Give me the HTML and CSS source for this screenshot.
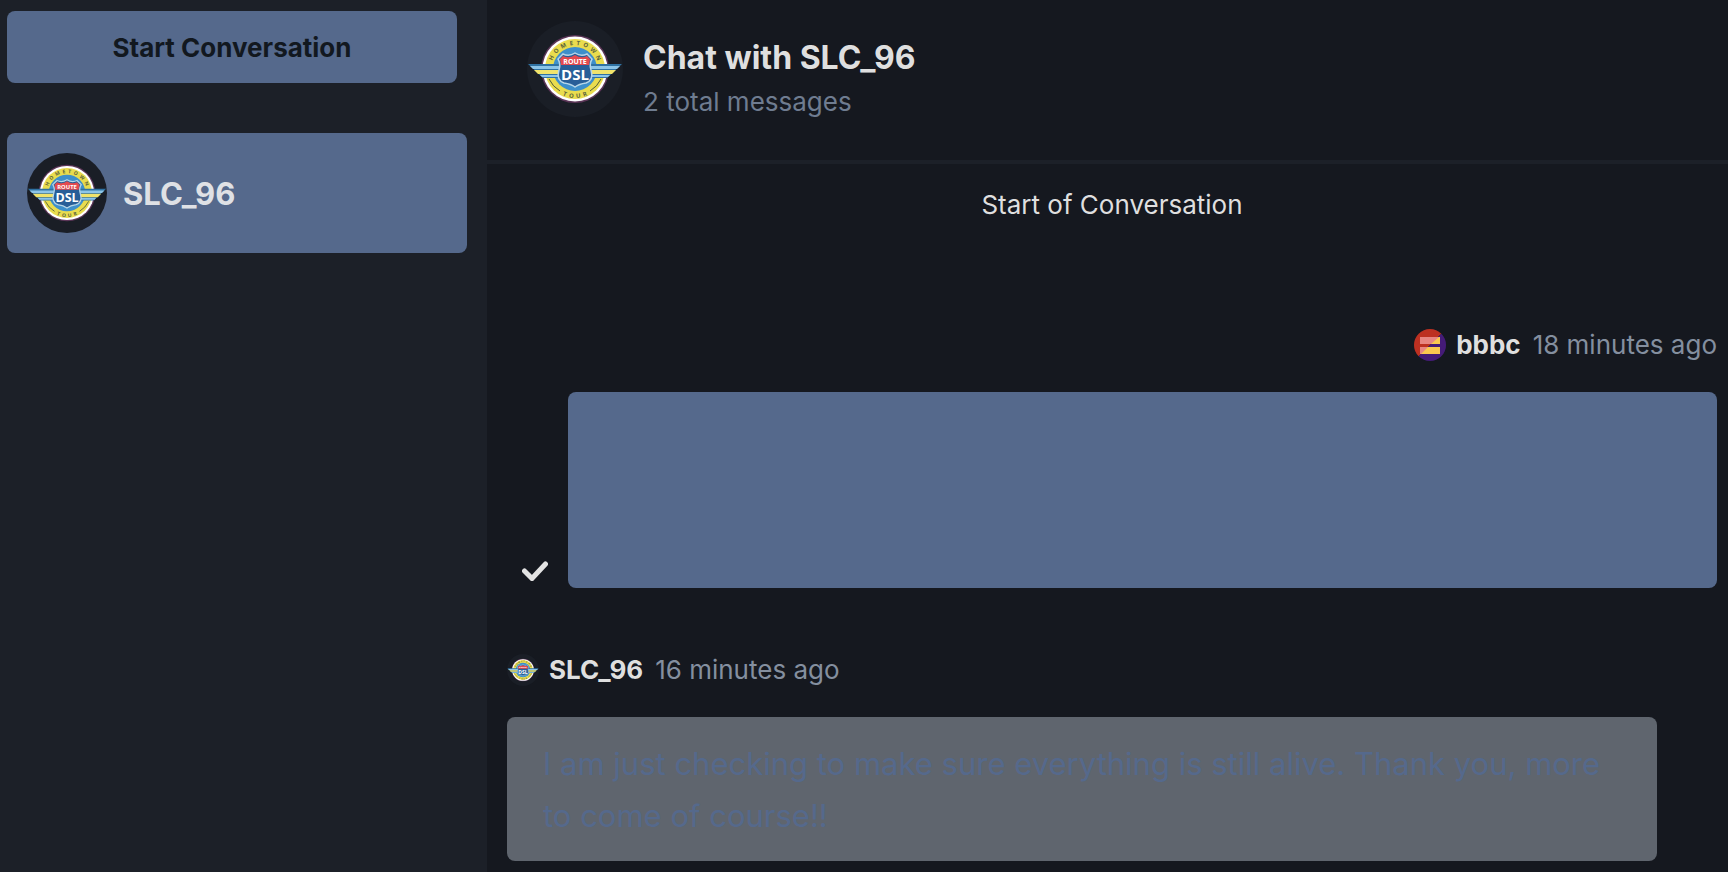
FILE: index.html
```html
<!DOCTYPE html>
<html lang="en">

<head>
    <meta charset="UTF-8">
    <meta name="viewport" content="width=device-width, initial-scale=1.0">
    <title>Messages</title>
    <link rel="stylesheet" href="styles.css">
</head>

<body>
    <!-- Route DSL badge, shared by every SLC_96 avatar -->
    <svg class="sprite" aria-hidden="true">
        <symbol id="route-dsl" viewBox="0 0 96 96">
            <path id="arc-top" d="M24 48a24 24 0 0 1 48 0" fill="none" />
            <path id="arc-bottom" d="M19 48a29 29 0 0 0 58 0" fill="none" />
            <circle cx="48" cy="48" r="34" fill="#5b3557" />
            <circle cx="48" cy="48" r="32.500" fill="#fff" />
            <circle cx="48" cy="48" r="30" fill="#e9dc4e" />
            <circle cx="48" cy="48" r="22" fill="#3d8fcb" />
            <path d="M22 58a28 28 0 0 0 11 12M74 58a28 28 0 0 1-11 12" fill="none" stroke="#4d5a3a" stroke-width="1" />
            <path d="M1 43h94L80 57H16z" fill="#2f72a3" />
            <path d="M3 45h90l-3 3H6z" fill="#8cc5e8" />
            <path d="M7 49h82l-4 4H11z" fill="#f0e36b" />
            <path d="M13 54h70l-2 2H15z" fill="#8cc5e8" />
            <path d="M36 33q6 3 12-1 6 4 12 1l5 5q-3 5-1 11 3 10-5 13-7 1-11 4-4-3-11-4-8-3-5-13 2-6-1-11z" fill="#285e98" stroke="#b5d5e8" stroke-width="1.500" />
            <path d="M36 35q6 3 12-1 6 4 12 1l3 3-1 6H34l-1-6z" fill="#e34a4f" />
            <text class="badge-route" x="48" y="43" text-anchor="middle">ROUTE</text>
            <text class="badge-dsl" x="48" y="59" text-anchor="middle">DSL</text>
            <text class="badge-ring"><textPath href="#arc-top" startOffset="50%" text-anchor="middle">H&ensp;O&ensp;M&ensp;E&ensp;T&ensp;O&ensp;W&ensp;N</textPath></text>
            <text class="badge-ring"><textPath href="#arc-bottom" startOffset="50%" text-anchor="middle">T&ensp;O&ensp;U&ensp;R</textPath></text>
        </symbol>
    </svg>

    <div class="app">
        <aside class="sidebar">
            <button class="start-btn" type="button">Start Conversation</button>
            <button class="conversation" type="button">
                <svg class="avatar avatar-md" aria-hidden="true"><use href="#route-dsl" /></svg>
                <span>SLC_96</span>
            </button>
        </aside>

        <main class="chat">
            <header class="chat-header">
                <svg class="avatar avatar-lg" aria-hidden="true"><use href="#route-dsl" /></svg>
                <div>
                    <h1 class="chat-title">Chat with SLC_96</h1>
                    <p class="chat-count">2 total messages</p>
                </div>
            </header>

            <section class="messages">
                <p class="start-label">Start of Conversation</p>

                <article class="message message-own">
                    <div class="meta">
                        <svg class="avatar avatar-sm" viewBox="0 0 32 32" aria-hidden="true">
                            <path d="M0 0h32L0 32z" fill="#bd3021" />
                            <path d="M32 0v32H0z" fill="#451b78" />
                            <path d="M6 8h20v7H6zM6 18h20v7H6z" fill="#e88682" />
                            <path d="M25 8h1v7h-9zM14 18h12v7H7z" fill="#fac84f" />
                        </svg>
                        <strong>bbbc</strong>
                        <time>18 minutes ago</time>
                    </div>
                    <div class="bubble-row">
                        <svg class="check" viewBox="0 0 26 20" aria-hidden="true">
                            <path d="M2.500 10l7.500 7.500L23.500 3" fill="none" stroke="#e3e3e3" stroke-width="5" stroke-linecap="round" />
                        </svg>
                        <div class="bubble"></div>
                    </div>
                </article>

                <article class="message">
                    <div class="meta">
                        <svg class="avatar avatar-sm" aria-hidden="true"><use href="#route-dsl" /></svg>
                        <strong>SLC_96</strong>
                        <time>16 minutes ago</time>
                    </div>
                    <div class="bubble">I am just checking to make sure everything is still alive. Thank you, more to come of course!!</div>
                </article>
            </section>
        </main>
    </div>
</body>

</html>
```
FILE: styles.css
```css
* {
    box-sizing: border-box;
}

body {
    margin: 0;
    background: #15181f;
    color: #dfdfdf;
    font-family: Inter, "Liberation Sans", sans-serif;
    font-size: 26px;
    line-height: 32px;
}

h1,
p {
    margin: 0;
}

button {
    border: 0;
    border-radius: 8px;
    background: #55698c;
    font-family: inherit;
    font-weight: 700;
    cursor: pointer;
}

/* holds the symbol only, draws nothing itself */
.sprite {
    position: absolute;
    width: 96px;
    height: 96px;
    pointer-events: none;
}

.app {
    display: flex;
    min-height: 100vh;
}

/* sidebar */
.sidebar {
    flex: 0 0 487px;
    display: flex;
    flex-direction: column;
    gap: 50px;
    padding: 11px 20px 11px 7px;
    background: #1c2028;
}

.start-btn {
    height: 72px;
    margin-right: 10px;
    color: #12181f;
    font-size: 26px;
}

.conversation {
    display: flex;
    align-items: center;
    gap: 16px;
    padding: 20px;
    color: #dfe1e5;
    font-size: 31px;
}

/* avatars */
.avatar {
    flex: none;
    border-radius: 50%;
    background: #1a1e26;
}

.avatar-sm {
    width: 32px;
    height: 32px;
}

.avatar-md {
    width: 80px;
    height: 80px;
}

.avatar-lg {
    width: 96px;
    height: 96px;
}

.badge-route,
.badge-dsl {
    fill: #fff;
    font-family: "Open Sans", sans-serif;
    font-weight: 700;
}

.badge-route {
    font-size: 7px;
}

.badge-dsl {
    font-size: 15px;
}

.badge-ring {
    fill: #5c653b;
    font-family: "Open Sans", sans-serif;
    font-size: 6px;
    font-weight: 700;
}

/* chat */
.chat {
    flex: 1;
    min-width: 0;
}

.chat-header {
    display: flex;
    gap: 20px;
    padding: 21px 40px 42px;
    border-bottom: 4px solid #1c2028;
}

.chat-title {
    padding-top: 17px;
    font-size: 32px;
    line-height: 40px;
}

.chat-count {
    padding-top: 8px;
    color: #6f7c90;
}

.messages {
    padding: 25px 11px 11px 20px;
}

.start-label {
    padding-bottom: 108px;
    text-align: center;
}

.meta {
    display: flex;
    align-items: center;
    gap: 12px;
    margin-bottom: 31px;
}

.meta strong {
    margin-left: -2px;
}

.meta time {
    color: #848f9f;
}

.bubble {
    width: 95%;
    padding: 21px 36px 19px;
    border-radius: 8px;
    background: #5f656e;
    color: #55698c;
    font-size: 31px;
    line-height: 52px;
}

.message-own {
    margin-bottom: 66px;
}

.message-own .meta {
    justify-content: flex-end;
}

.message-own .bubble {
    min-height: 196px;
    background: #55698c;
}

.bubble-row {
    display: flex;
    justify-content: flex-end;
    align-items: flex-end;
    gap: 20px;
}

.check {
    flex: none;
    width: 26px;
    height: 20px;
    margin-bottom: 7px;
}
```
